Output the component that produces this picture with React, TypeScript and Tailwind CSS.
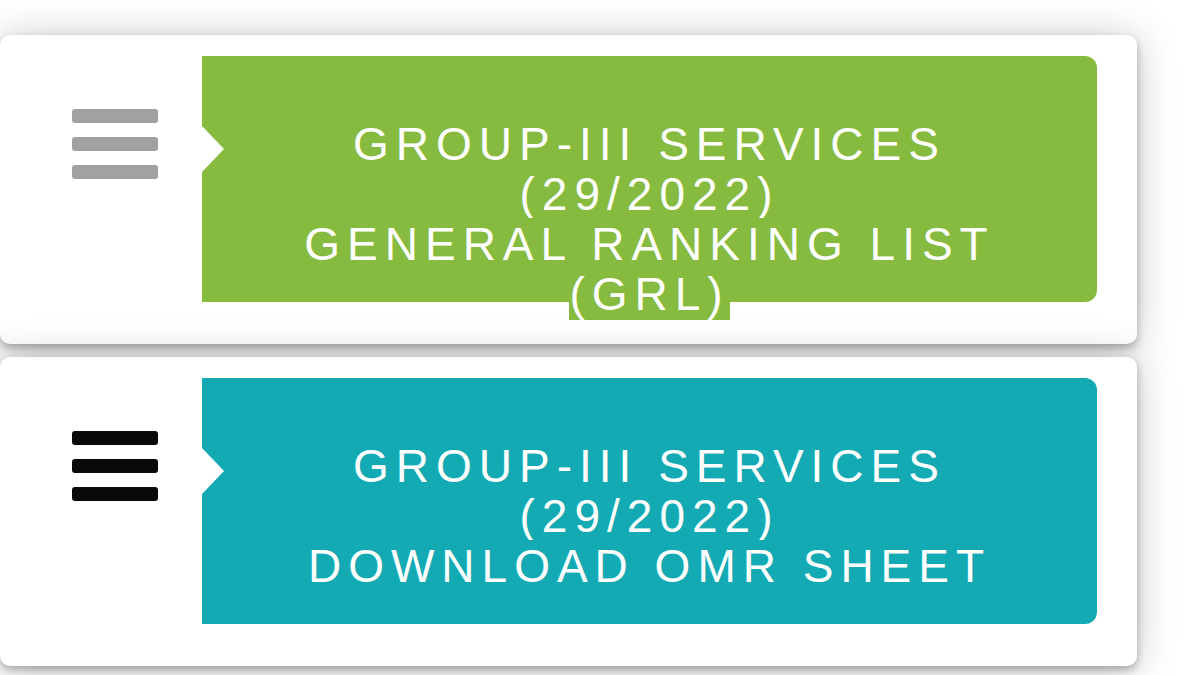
import React from "react";

// result cards: hamburger handle + coloured label with a notch
const items = [
  {
    lines: ["GROUP-III SERVICES", "(29/2022)", "GENERAL RANKING LIST", "(GRL)"],
    bg: "bg-[#86bb3f]",
    bar: "bg-[#a1a1a1]",
  },
  {
    lines: ["GROUP-III SERVICES", "(29/2022)", "DOWNLOAD OMR SHEET"],
    bg: "bg-[#14aab3]",
    bar: "bg-[#0a0a0a]",
  },
];

function Handle({ bar }: { bar: string }) {
  return (
    <div className="flex flex-col gap-[14px] pl-[72px] pt-[74px]">
      <span className={`block w-[86px] h-[14px] rounded-[3px] ${bar}`} />
      <span className={`block w-[86px] h-[14px] rounded-[3px] ${bar}`} />
      <span className={`block w-[86px] h-[14px] rounded-[3px] ${bar}`} />
    </div>
  );
}

export default function App() {
  return (
    <div className="min-h-[675px] bg-white overflow-hidden pt-[35px] flex flex-col gap-[13px] font-['Liberation_Sans',Arial,sans-serif]">
      {items.map((item, i) => (
        <div
          key={i}
          className="w-[1137px] h-[309px] shrink-0 bg-white rounded-[10px] shadow-[0_2px_40px_rgba(0,0,0,0.22),0_4px_8px_rgba(0,0,0,0.28)] flex"
        >
          <div className="w-[202px] shrink-0">
            <Handle bar={item.bar} />
          </div>
          <div className={`relative mt-[21px] w-[895px] h-[246px] rounded-r-[12px] ${item.bg}`}>
            {/* notch */}
            <span className="absolute left-0 top-[70px] w-0 h-0 border-y-[23px] border-y-transparent border-l-[22px] border-l-white" />
            <p className="pt-[63px] text-center text-white text-[46px] leading-[50px] tracking-[7px] uppercase">
              {item.lines.map((line, j) => (
                <React.Fragment key={j}>
                  <span className={item.bg}>{line}</span>
                  {j < item.lines.length - 1 && <br />}
                </React.Fragment>
              ))}
            </p>
          </div>
        </div>
      ))}
    </div>
  );
}
